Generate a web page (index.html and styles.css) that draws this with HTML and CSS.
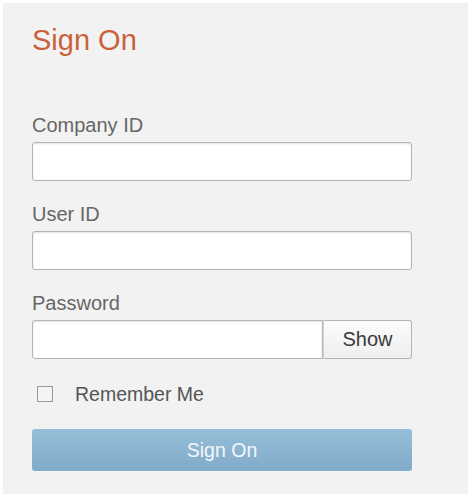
FILE: index.html
```html
<!DOCTYPE html>
<html lang="en">
<head>
    <meta charset="UTF-8">
    <meta name="viewport" content="width=device-width, initial-scale=1.0">
    <title>Sign On</title>
    <link rel="stylesheet" href="styles.css">
</head>
<body>
    <div class="signon-panel">
        <h1 class="signon-title">Sign On</h1>
        <form class="signon-form">
            <label class="field-label" for="company-id">Company ID</label>
            <input class="text-input" type="text" id="company-id">

            <label class="field-label" for="user-id">User ID</label>
            <input class="text-input" type="text" id="user-id">

            <label class="field-label" for="password">Password</label>
            <div class="password-group">
                <input class="text-input password-input" type="password" id="password">
                <button class="show-button" type="button">Show</button>
            </div>

            <label class="remember-row">
                <input class="remember-box" type="checkbox">
                <span>Remember Me</span>
            </label>

            <button class="submit-button" type="submit">Sign On</button>
        </form>
    </div>
</body>
</html>
```

FILE: styles.css
```css
html, body {
    margin: 0;
    padding: 0;
    background-color: #fff;
    font-family: "Liberation Sans", Arial, sans-serif;
}

.signon-panel {
    box-sizing: border-box;
    height: 491px;
    margin: 3px 5px 0 3px;
    padding: 21px 0 0 29px;
    background-color: #f2f2f2;
}

.signon-title {
    margin: 0;
    font-size: 29px;
    line-height: 32px;
    font-weight: normal;
    color: #c9623a;
}

.signon-form {
    display: flex;
    flex-direction: column;
    width: 380px;
    margin-top: 58px;
}

.field-label {
    font-size: 20px;
    line-height: 22px;
    color: #666;
    margin-bottom: 6px;
}

.text-input {
    box-sizing: border-box;
    height: 39px;
    margin: 0 0 22px 0;
    padding: 0 8px;
    border: 1px solid #b4b4b4;
    border-radius: 3px;
    background-color: #fff;
    box-shadow: inset 0 1px 2px rgba(0, 0, 0, 0.12);
    font-family: inherit;
    font-size: 18px;
}

.password-group {
    display: flex;
    height: 39px;
}

.password-input {
    flex: 1;
    margin: 0;
    border-radius: 3px 0 0 3px;
}

.show-button {
    box-sizing: border-box;
    width: 89px;
    height: 39px;
    border: 1px solid #b4b4b4;
    border-left: 1px solid #d2d2d2;
    border-radius: 0 3px 3px 0;
    background: linear-gradient(#fbfbfb, #efefef);
    font-family: inherit;
    font-size: 20px;
    color: #3a3a3a;
    padding: 0;
}

.remember-row {
    display: flex;
    align-items: center;
    height: 22px;
    margin-top: 24px;
    font-size: 19.5px;
    color: #555;
}

.remember-box {
    appearance: none;
    box-sizing: border-box;
    width: 16px;
    height: 16px;
    margin: 0 22px 0 5px;
    border: 1px solid #9a9a9a;
    background-color: #f4f4f4;
}

.submit-button {
    box-sizing: border-box;
    height: 42px;
    margin-top: 24px;
    border: none;
    border-radius: 3px;
    background: linear-gradient(#95bed8, #80abc9);
    color: #f4f8fb;
    font-family: inherit;
    font-size: 19.5px;
}
```
